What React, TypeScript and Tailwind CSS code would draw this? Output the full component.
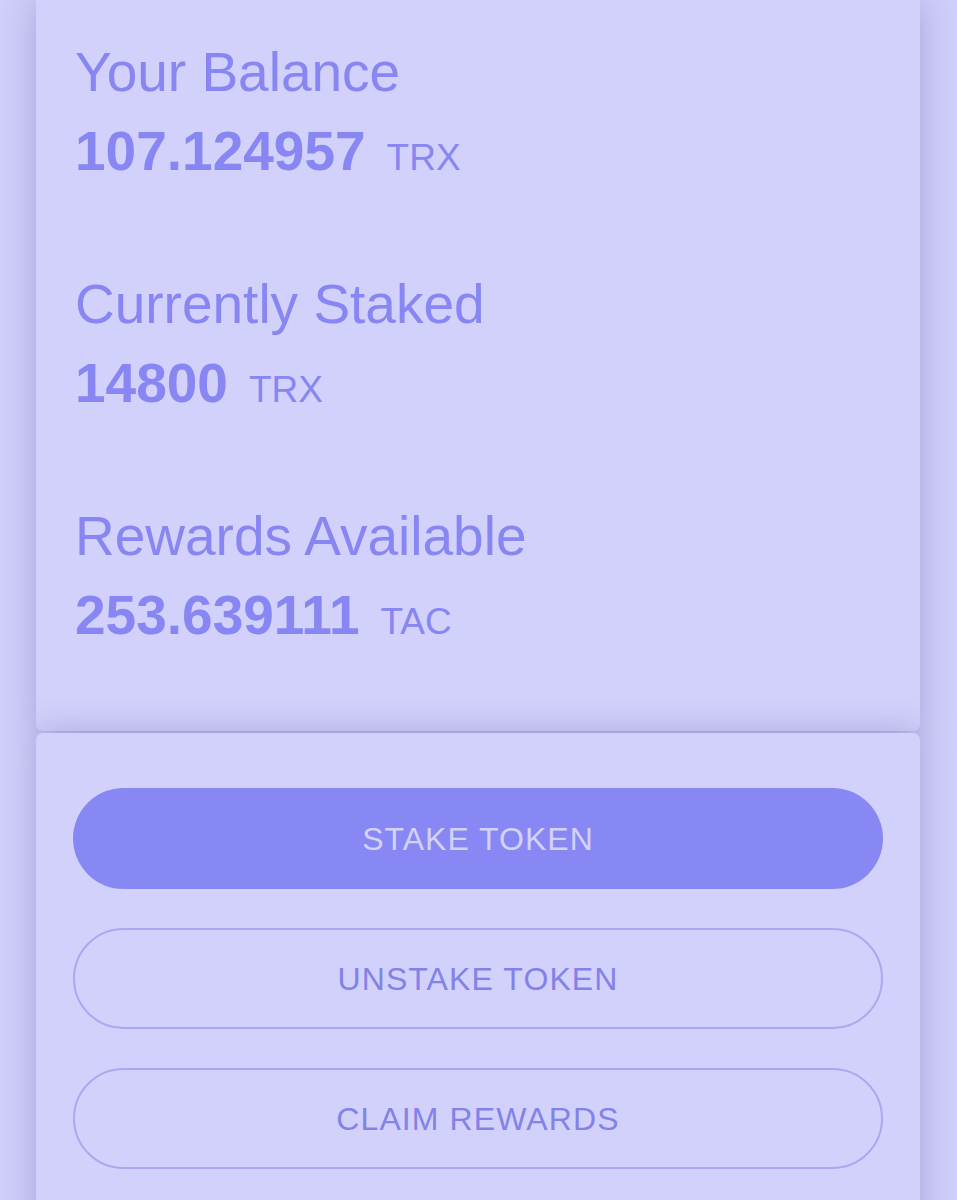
import React from "react";

const Stat = ({ label, value, unit }: { label: string; value: string; unit: string }) => (
  <div>
    <div className="text-[55px] leading-[79px] text-[#8786f2]">{label}</div>
    <div className="text-[55px] leading-[79px] text-[#8786f2]">
      <span className="font-bold">{value}</span>
      <span className="ml-[21px] text-[37px] leading-none">{unit}</span>
    </div>
  </div>
);

export default function App() {
  return (
    <div
      className="min-h-[1200px] w-full overflow-hidden bg-[#d0cffa] px-[36px] pr-[37px]"
      style={{ fontFamily: '"Liberation Sans", Arial, Helvetica, sans-serif' }}
    >
      <div className="relative z-0 h-[731px] rounded-b-[7px] bg-[#d2d1fb] pl-[39px] pt-[33px] shadow-[0_0_34px_rgba(70,70,150,0.32)]">
        <div className="flex flex-col gap-[74px]">
          <Stat label="Your Balance" value="107.124957" unit="TRX" />
          <Stat label="Currently Staked" value="14800" unit="TRX" />
          <Stat label="Rewards Available" value="253.639111" unit="TAC" />
        </div>
      </div>
      <div className="relative z-10 mt-[2px] h-[520px] rounded-t-[7px] bg-[#d2d1fb] px-[37px] pt-[55px] shadow-[0_0_34px_rgba(70,70,150,0.32)]">
        <div className="flex flex-col gap-[39px]">
          <button className="flex h-[101px] w-full items-center justify-center rounded-full bg-[#8888f5] text-[32px] tracking-[1px] text-[#d3d2fb]">
            STAKE TOKEN
          </button>
          <button className="flex h-[101px] w-full items-center justify-center rounded-full border-2 border-[#aaa9f0] text-[32px] tracking-[1.1px] text-[#8382e8]">
            UNSTAKE TOKEN
          </button>
          <button className="flex h-[101px] w-full items-center justify-center rounded-full border-2 border-[#aaa9f0] text-[32px] tracking-[1.1px] text-[#8382e8]">
            CLAIM REWARDS
          </button>
        </div>
      </div>
    </div>
  );
}
